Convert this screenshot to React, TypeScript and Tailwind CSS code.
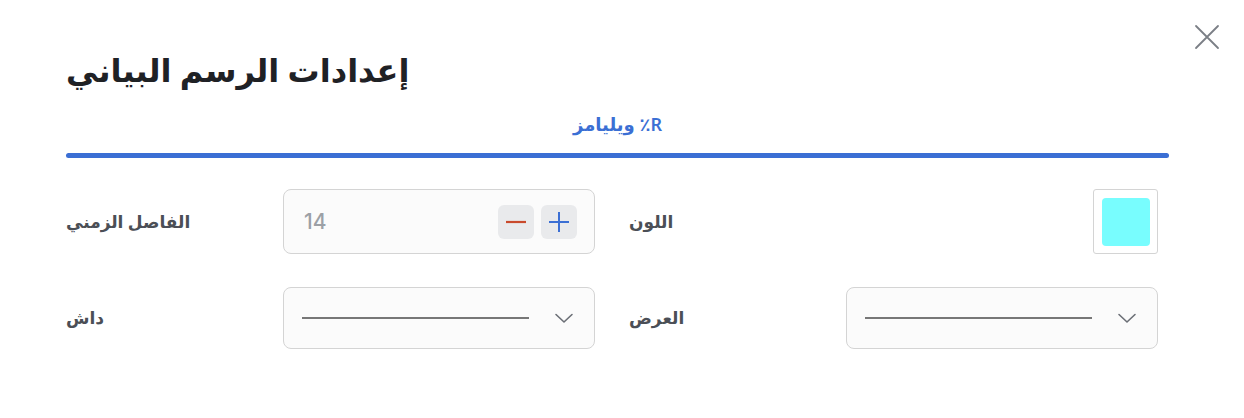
import React from "react";

const font = { fontFamily: '"Noto Sans", "DejaVu Sans", sans-serif' };

function LineSelect() {
  return (
    <div className="flex h-[62px] w-[312px] items-center rounded-lg border border-[#d4d4d4] bg-[#fbfbfb] pl-[18px] pr-[18px]">
      <div className="h-[2px] w-[227px] bg-[#777777]" />
      <div className="flex-1" />
      <svg width="24" height="24" viewBox="0 0 24 24" fill="none" stroke="#6b6f76" strokeWidth="1.6" strokeLinecap="round" strokeLinejoin="round">
        <path d="M4 8.5l8 7.5 8-7.5" />
      </svg>
    </div>
  );
}

export default function App() {
  return (
    <div className="relative h-[418px] w-full bg-white pl-[66px] pr-[75px] pt-[44px]" style={font}>
      {/* close */}
      <button className="absolute right-[24px] top-[24px] text-[#7b7f86]">
        <svg width="26" height="26" viewBox="0 0 26 26" fill="none" stroke="currentColor" strokeWidth="1.8" strokeLinecap="round">
          <path d="M2 2l22 22M24 2L2 24" />
        </svg>
      </button>

      <h2 className="text-[32px] font-bold leading-[52px] text-[#1f2125]">إعدادات الرسم البياني</h2>

      {/* tabs */}
      <div className="mt-[13px]">
        <div dir="rtl" className="text-center text-[18px] font-semibold leading-[30px] text-[#3b6fd4]">R٪ ويليامز</div>
        <div className="mt-[14px] h-[5px] rounded-full bg-[#3b6fd4]" />
      </div>

      {/* settings */}
      <div className="mt-[31px] grid grid-cols-2 gap-x-[34px] gap-y-[33px] pr-[11px]">
        <div className="flex items-center justify-between">
          <span className="text-[17px] font-bold text-[#4b4f56]">الفاصل الزمني</span>
          <div className="flex h-[65px] w-[312px] items-center rounded-lg border border-[#d4d4d4] bg-[#fbfbfb] pl-[20px] pr-[17px]">
            <span className="flex-1 text-[21px] font-medium text-[#9ca0a6]" style={{ fontFamily: '"Inter", sans-serif' }}>14</span>
            <div className="flex gap-[7px]">
              <button className="flex h-[34px] w-[36px] items-center justify-center rounded-md bg-[#e9eaec]">
                <svg width="22" height="22" viewBox="0 0 22 22" stroke="#c94a2c" strokeWidth="2.2">
                  <path d="M1 11h20" />
                </svg>
              </button>
              <button className="flex h-[34px] w-[36px] items-center justify-center rounded-md bg-[#e9eaec]">
                <svg width="22" height="22" viewBox="0 0 22 22" stroke="#3b6fd4" strokeWidth="2">
                  <path d="M1 11h20M11 1v20" />
                </svg>
              </button>
            </div>
          </div>
        </div>

        <div className="flex items-center justify-between">
          <span className="text-[17px] font-bold text-[#4b4f56]">اللون</span>
          <div className="flex h-[65px] w-[65px] items-center justify-center rounded-[3px] border border-[#d4d4d4] bg-white">
            <div className="h-[48px] w-[48px] rounded-[4px] bg-[#78fdfe]" />
          </div>
        </div>

        <div className="flex items-center justify-between">
          <span className="text-[17px] font-bold text-[#4b4f56]">داش</span>
          <LineSelect />
        </div>

        <div className="flex items-center justify-between">
          <span className="text-[17px] font-bold text-[#4b4f56]">العرض</span>
          <LineSelect />
        </div>
      </div>
    </div>
  );
}
